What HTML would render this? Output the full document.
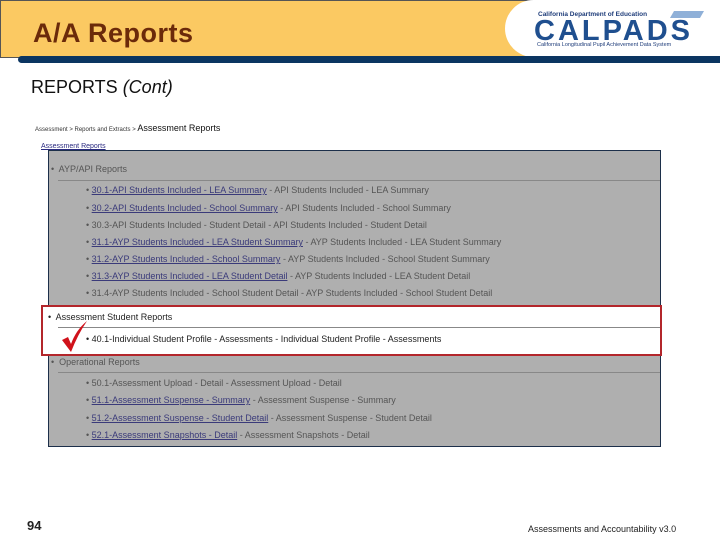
<!DOCTYPE html>
<html><head><meta charset="utf-8"><style>
*{margin:0;padding:0;box-sizing:border-box}
body{width:720px;height:540px;background:#fff;position:relative;overflow:hidden;font-family:"Liberation Sans",sans-serif}
.a{position:absolute}
.hdr{left:0;top:0;width:720px;height:58px;background:#fbc962;border:1px solid #555}
.logo{left:505px;top:0;width:215px;height:57px;background:#fff;border-radius:40px 0 0 40px}
.bar{left:18px;top:56px;width:702px;height:7px;background:#0b3561;border-radius:4px 0 0 4px}
.title{left:33px;top:18px;font-size:27px;font-weight:bold;color:#6b2a0a;letter-spacing:0.5px}
.rep{left:31px;top:77px;font-size:18px;color:#111}
.panel{left:48px;top:150px;width:613px;height:297px;background:#afafaf;border:1px solid #1c2f4a}
.red{left:41px;top:305px;width:621px;height:51px;background:#fff;border:2px solid #b3262b}
.t{position:absolute;font-size:9px;color:#555;white-space:nowrap}
.u{color:#3a3a7a;text-decoration:underline}
.line{position:absolute;height:1px;background:#888}
</style></head><body>
<div class="a hdr"></div>
<div class="a logo"></div>
<div class="a bar"></div>
<div class="a title">A/A Reports</div>
<div class="a" style="left:538px;top:11px;font-size:6.5px;font-weight:bold;color:#1f3d7a">California Department of Education</div>
<div class="a" style="left:534px;top:15px;font-size:29px;font-weight:bold;color:#1f4f8f;letter-spacing:3px">CALPADS</div>
<div class="a" style="left:537px;top:42px;font-size:5.5px;color:#1f3d7a">California Longitudinal Pupil Achievement Data System</div>
<div class="a" style="left:672px;top:11px;width:30px;height:7px;background:#8fb0d8;transform:skewX(-30deg)"></div>
<div class="a rep">REPORTS <i>(Cont)</i></div>
<div class="t" style="left:35px;top:123px;font-size:6px;color:#333">Assessment &gt; Reports and Extracts &gt; <span style="font-size:9px;color:#111">Assessment Reports</span></div>
<div class="t u" style="left:41px;top:143px;font-size:7px;color:#2a2a80">Assessment Reports</div>
<div class="a panel"></div>
<div class="t" style="left:51px;top:164px">•&nbsp; AYP/API Reports</div>
<div class="line" style="left:58px;top:180px;width:602px"></div>
<div class="t" style="left:86px;top:185px">• <span class="u">30.1-API Students Included - LEA Summary</span> - API Students Included - LEA Summary</div>
<div class="t" style="left:86px;top:203px">• <span class="u">30.2-API Students Included - School Summary</span> - API Students Included - School Summary</div>
<div class="t" style="left:86px;top:220px">• 30.3-API Students Included - Student Detail - API Students Included - Student Detail</div>
<div class="t" style="left:86px;top:237px">• <span class="u">31.1-AYP Students Included - LEA Student Summary</span> - AYP Students Included - LEA Student Summary</div>
<div class="t" style="left:86px;top:254px">• <span class="u">31.2-AYP Students Included - School Summary</span> - AYP Students Included - School Student Summary</div>
<div class="t" style="left:86px;top:271px">• <span class="u">31.3-AYP Students Included - LEA Student Detail</span> - AYP Students Included - LEA Student Detail</div>
<div class="t" style="left:86px;top:288px">• 31.4-AYP Students Included - School Student Detail - AYP Students Included - School Student Detail</div>
<div class="a red"></div>
<div class="t" style="left:48px;top:312px;color:#222">•&nbsp; Assessment Student Reports</div>
<div class="line" style="left:58px;top:327px;width:602px"></div>
<div class="t" style="left:86px;top:334px;color:#222">• 40.1-Individual Student Profile - Assessments - Individual Student Profile - Assessments</div>
<svg class="a" style="left:60px;top:320px" width="28" height="34"><path d="M2 20 L8 17 L11 24 Q16 10 27 1 Q18 14 11 32 Z" fill="#d0121b"/></svg>
<div class="t" style="left:51px;top:357px">•&nbsp; Operational Reports</div>
<div class="line" style="left:58px;top:372px;width:602px"></div>
<div class="t" style="left:86px;top:378px">• 50.1-Assessment Upload - Detail - Assessment Upload - Detail</div>
<div class="t" style="left:86px;top:395px">• <span class="u">51.1-Assessment Suspense - Summary</span> - Assessment Suspense - Summary</div>
<div class="t" style="left:86px;top:413px">• <span class="u">51.2-Assessment Suspense - Student Detail</span> - Assessment Suspense - Student Detail</div>
<div class="t" style="left:86px;top:430px">• <span class="u">52.1-Assessment Snapshots - Detail</span> - Assessment Snapshots - Detail</div>
<div class="a" style="left:27px;top:518px;font-size:13px;font-weight:bold;color:#222">94</div>
<div class="a" style="left:528px;top:524px;font-size:9px;color:#222">Assessments and Accountability v3.0</div>
</body></html>
